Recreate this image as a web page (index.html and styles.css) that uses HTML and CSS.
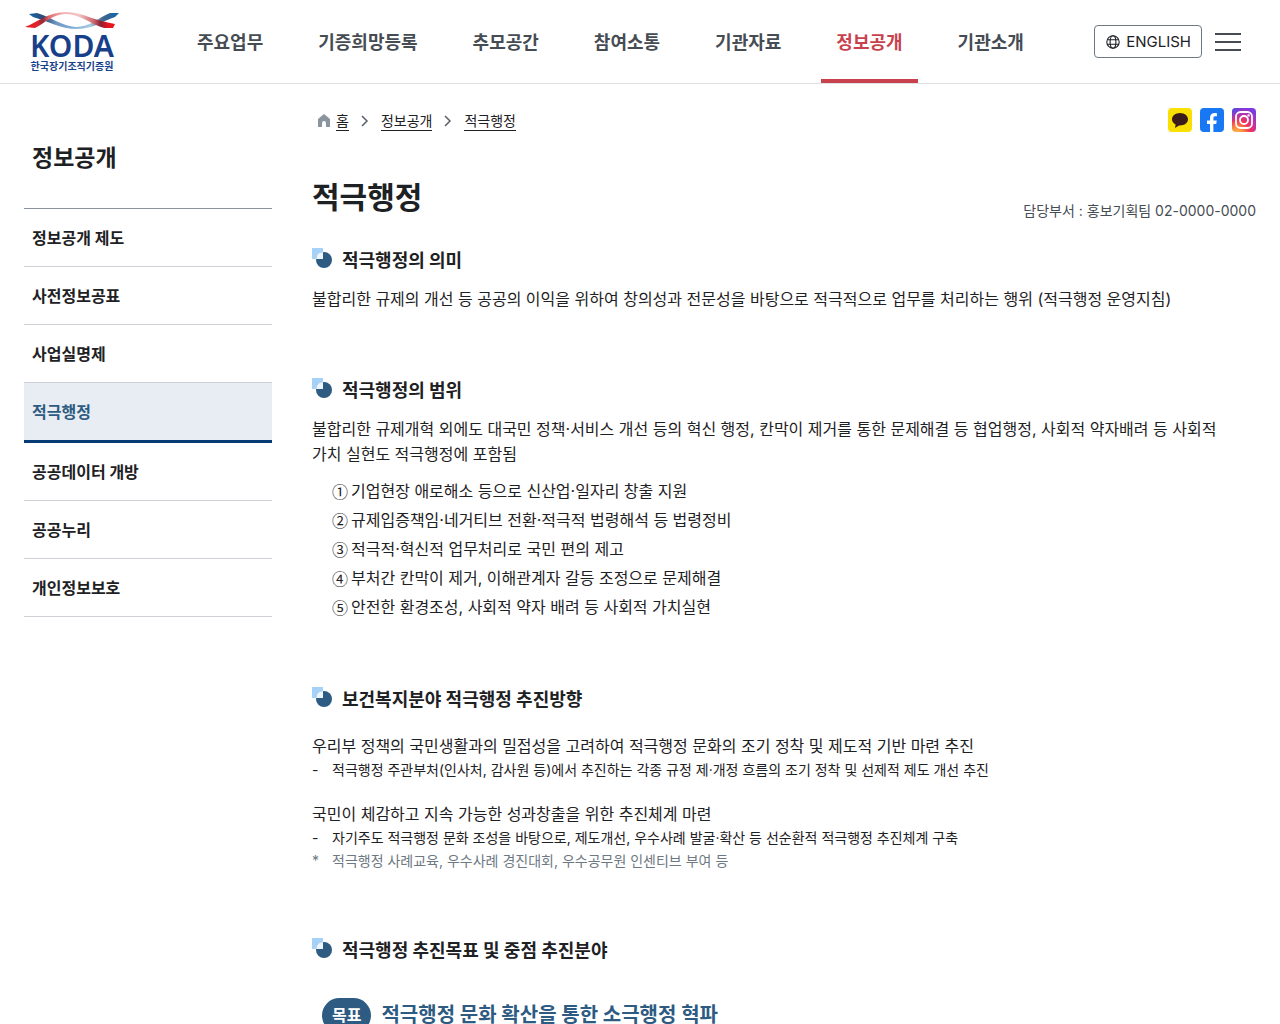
FILE: index.html
```html
<!DOCTYPE html>
<html lang="ko">
<head>
<meta charset="utf-8">
<meta name="viewport" content="width=device-width, initial-scale=1">
<title>적극행정 - 한국장기조직기증원</title>
<link rel="stylesheet" href="styles.css">
</head>
<body>
<svg class="defs" width="0" height="0" aria-hidden="true">
  <symbol id="bullet" viewBox="0 0 20 20">
    <path fill="#a6d2f8" d="M0 0h11v11H0z"/>
    <circle cx="12" cy="12" r="8" fill="#2d5b82"/>
    <path fill="#eef6fd" d="M4 11a7 7 0 0 1 7-7v7z"/>
  </symbol>
</svg>

<header class="header">
  <a class="logo" href="#">
    <svg class="logo-mark" viewBox="0 0 96 18" aria-hidden="true">
      <defs>
        <linearGradient id="red" x1="0" x2="1">
          <stop offset="0" stop-color="#e8161d"/><stop offset=".14" stop-color="#e0252b"/><stop offset=".2" stop-color="#8c2b3c"/><stop offset=".27" stop-color="#e56a6c"/><stop offset=".42" stop-color="#f3b3b3"/><stop offset=".6" stop-color="#f3c4c4"/><stop offset=".76" stop-color="#cf6a70"/><stop offset=".84" stop-color="#8a2236"/><stop offset=".92" stop-color="#e5161d"/><stop offset="1" stop-color="#e5161d"/>
        </linearGradient>
        <linearGradient id="blue" x1="0" x2="1">
          <stop offset="0" stop-color="#1565ae"/><stop offset=".16" stop-color="#2b4a74"/><stop offset=".3" stop-color="#6d96c0"/><stop offset=".5" stop-color="#86b2d8"/><stop offset=".68" stop-color="#a9cae4"/><stop offset=".82" stop-color="#43668a"/><stop offset="1" stop-color="#0d63b0"/>
        </linearGradient>
      </defs>
      <path fill="url(#blue)" d="M5 2l8-1c14 4 25 13 39 14 13 0 22-9 34-14h9l-4 4C80 8 70 17 53 17 36 17 24 9 9 5z"/>
      <path fill="url(#red)" d="M1 15C14 10 24 0 42 0c16 0 29 9 49 12l-2 4h-9C66 12 56 2 42 2 29 2 21 11 11 16z"/>
    </svg>
    <span class="logo-name">KODA</span>
    <span class="logo-sub">한국장기조직기증원</span>
  </a>
  <nav class="gnb" aria-label="주 메뉴">
    <a href="#">주요업무</a>
    <a href="#">기증희망등록</a>
    <a href="#">추모공간</a>
    <a href="#">참여소통</a>
    <a href="#">기관자료</a>
    <a href="#" class="active" aria-current="true">정보공개</a>
    <a href="#">기관소개</a>
  </nav>
  <div class="tools">
    <button class="lang" type="button">
      <svg viewBox="0 0 16 16" width="16" height="16" fill="none" stroke="currentColor" stroke-width="1.1" aria-hidden="true"><circle cx="8" cy="8" r="6.2"/><ellipse cx="8" cy="8" rx="2.9" ry="6.2"/><path d="M2.4 5.8h11.2M2.4 10.2h11.2"/></svg>
      ENGLISH
    </button>
    <button class="menu" type="button" aria-label="전체메뉴">
      <svg viewBox="0 0 26 20" width="26" height="20" stroke="#464c53" stroke-width="2" aria-hidden="true"><path d="M0 2h26M0 10h26M0 18h26"/></svg>
    </button>
  </div>
</header>

<div class="page">
  <aside class="side">
    <h2 class="side-title">정보공개</h2>
    <ul class="side-list">
      <li><a href="#">정보공개 제도</a></li>
      <li><a href="#">사전정보공표</a></li>
      <li><a href="#">사업실명제</a></li>
      <li class="active"><a href="#" aria-current="page">적극행정</a></li>
      <li><a href="#">공공데이터 개방</a></li>
      <li><a href="#">공공누리</a></li>
      <li><a href="#">개인정보보호</a></li>
    </ul>
  </aside>

  <main class="content">
    <div class="topline">
      <nav class="crumbs" aria-label="현재 위치">
        <svg class="home" viewBox="0 0 12 13" width="12" height="13" aria-hidden="true"><path fill="#8a949e" d="M6 0 0 5v8h4V9a2 2 0 0 1 4 0v4h4V5z"/></svg>
        <a href="#">홈</a>
        <svg class="arrow" viewBox="0 0 8 12" width="8" height="12" aria-hidden="true"><path d="m1 1 5 5-5 5"/></svg>
        <a href="#">정보공개</a>
        <svg class="arrow" viewBox="0 0 8 12" width="8" height="12" aria-hidden="true"><path d="m1 1 5 5-5 5"/></svg>
        <a href="#">적극행정</a>
      </nav>
      <div class="share">
        <a href="#" aria-label="카카오톡"><svg viewBox="0 0 24 24" width="24" height="24"><rect width="24" height="24" rx="4" fill="#f9e000"/><path fill="#3b1c1c" d="M12 5c-4.500 0-8 2.800-8 6.300 0 2.300 1.500 4.200 3.600 5.300L7 20l4-2.500h1c4.500 0 8-2.700 8-6.200S16.500 5 12 5z"/></svg></a>
        <a href="#" aria-label="페이스북"><svg viewBox="0 0 24 24" width="24" height="24"><rect width="24" height="24" rx="4" fill="#1877f2"/><path fill="#fff" d="M10 24v-8H7v-3.500h3V10c0-3.300 1.800-5 4.700-5 .9 0 1.700.1 2.300.2v3h-1.600c-1.600 0-2 .9-2 2v2.300h3.400l-.6 3.500h-2.800v8z"/></svg></a>
        <a href="#" aria-label="인스타그램"><svg viewBox="0 0 24 24" width="24" height="24">
          <defs>
            <radialGradient id="insta" cx=".2" cy="1.080" r="1.150"><stop offset="0" stop-color="#fec053"/><stop offset=".25" stop-color="#f98a3c"/><stop offset=".5" stop-color="#f2325a"/><stop offset=".75" stop-color="#c22fa8"/><stop offset="1" stop-color="#7a3be0"/></radialGradient>
            <radialGradient id="instaCorner" cx="0" cy="0" r=".6"><stop offset="0" stop-color="#3f51e8"/><stop offset="1" stop-color="#7a3be0" stop-opacity="0"/></radialGradient>
          </defs>
          <rect width="24" height="24" rx="4" fill="url(#insta)"/><rect width="24" height="24" rx="4" fill="url(#instaCorner)"/>
          <g fill="none" stroke="#fff" stroke-width="1.800"><rect x="4" y="4" width="16" height="16" rx="4.500"/><circle cx="12" cy="12" r="4"/></g><circle cx="16.600" cy="7.400" r="1.200" fill="#fff"/>
        </svg></a>
      </div>
    </div>

    <div class="title-row">
      <h1>적극행정</h1>
      <p class="dept">담당부서 : 홍보기획팀 02-0000-0000</p>
    </div>

    <section>
      <h2><svg class="bullet"><use href="#bullet"/></svg>적극행정의 의미</h2>
      <p>불합리한 규제의 개선 등 공공의 이익을 위하여 창의성과 전문성을 바탕으로 적극적으로 업무를 처리하는 행위 (적극행정 운영지침)</p>
    </section>

    <section>
      <h2><svg class="bullet"><use href="#bullet"/></svg>적극행정의 범위</h2>
      <p>불합리한 규제개혁 외에도 대국민 정책·서비스 개선 등의 혁신 행정, 칸막이 제거를 통한 문제해결 등 협업행정, 사회적 약자배려 등 사회적 가치 실현도 적극행정에 포함됨</p>
      <ul class="numbered">
        <li><span>①</span>기업현장 애로해소 등으로 신산업·일자리 창출 지원</li>
        <li><span>②</span>규제입증책임·네거티브 전환·적극적 법령해석 등 법령정비</li>
        <li><span>③</span>적극적·혁신적 업무처리로 국민 편의 제고</li>
        <li><span>④</span>부처간 칸막이 제거, 이해관계자 갈등 조정으로 문제해결</li>
        <li><span>⑤</span>안전한 환경조성, 사회적 약자 배려 등 사회적 가치실현</li>
      </ul>
    </section>

    <section>
      <h2><svg class="bullet"><use href="#bullet"/></svg>보건복지분야 적극행정 추진방향</h2>
      <div class="plans">
        <div>
          <p>우리부 정책의 국민생활과의 밀접성을 고려하여 적극행정 문화의 조기 정착 및 제도적 기반 마련 추진</p>
          <ul class="notes">
            <li><span>-</span>적극행정 주관부처(인사처, 감사원 등)에서 추진하는 각종 규정 제·개정 흐름의 조기 정착 및 선제적 제도 개선 추진</li>
          </ul>
        </div>
        <div>
          <p>국민이 체감하고 지속 가능한 성과창출을 위한 추진체계 마련</p>
          <ul class="notes">
            <li><span>-</span>자기주도 적극행정 문화 조성을 바탕으로, 제도개선, 우수사례 발굴·확산 등 선순환적 적극행정 추진체계 구축</li>
            <li class="remark"><span>*</span>적극행정 사례교육, 우수사례 경진대회, 우수공무원 인센티브 부여 등</li>
          </ul>
        </div>
      </div>
    </section>

    <section>
      <h2><svg class="bullet"><use href="#bullet"/></svg>적극행정 추진목표 및 중점 추진분야</h2>
      <div class="goal">
        <span class="badge">목표</span>
        <strong>적극행정 문화 확산을 통한 소극행정 혁파</strong>
      </div>
    </section>
  </main>
</div>
</body>
</html>
```
FILE: styles.css
```css
* {
  box-sizing: border-box;
}

body,
h1,
h2,
p,
ul {
  margin: 0;
  padding: 0;
}

ul {
  list-style: none;
}

a {
  color: inherit;
  text-decoration: none;
}

body {
  background: #fff;
  color: #1e2124;
  font-family: Inter, "Noto Sans CJK KR", sans-serif;
  font-size: 16px;
  line-height: 25px;
  word-break: keep-all;
}

button {
  font: inherit;
  color: inherit;
  background: none;
  cursor: pointer;
}

svg {
  display: block;
  flex: none;
}

.defs {
  position: absolute;
}

/* Header */

.header {
  display: flex;
  height: 84px;
  padding: 0 39px 0 24px;
  border-bottom: 1px solid #e0e2e4;
}

.logo {
  display: flex;
  flex-direction: column;
  align-items: center;
  width: 96px;
  padding-top: 12px;
  color: #173f8a;
  font-family: "Noto Sans", "Noto Sans CJK KR", sans-serif;
  font-weight: 700;
}

.logo-mark {
  width: 96px;
  height: 18px;
}

.logo-name {
  font-size: 30px;
  line-height: 31px;
  font-weight: 600;
}

.logo-sub {
  font-size: 10px;
  line-height: 10px;
  white-space: nowrap;
}

.gnb {
  display: flex;
  gap: 25px;
  margin-left: 62px;
}

.gnb a {
  display: flex;
  align-items: center;
  padding: 6px 15px 0;
  border-bottom: 4px solid transparent;
  color: #464c53;
  font-size: 18px;
  font-weight: 700;
  white-space: nowrap;
}

.gnb .active {
  color: #c8424e;
  border-color: #c8424e;
}

.tools {
  display: flex;
  align-items: center;
  gap: 13px;
  margin-left: auto;
}

.lang {
  display: flex;
  align-items: center;
  gap: 5px;
  height: 33px;
  padding: 0 10px;
  border: 1px solid #6d7882;
  border-radius: 4px;
  font-size: 15px;
}

.menu {
  padding: 0;
  border: 0;
}

/* Page columns */

.page {
  display: grid;
  grid-template-columns: 248px minmax(0, 1fr);
  gap: 40px;
  padding: 24px 24px 0;
}

.side-title {
  padding: 34px 8px 34px;
  border-bottom: 1px solid #8a949e;
  font-size: 23px;
  line-height: 32px;
}

.side-list a {
  display: flex;
  align-items: center;
  min-height: 57px;
  padding: 2px 8px 0;
  font-weight: 700;
}

.side-list li {
  border-bottom: 1px solid #cdd1d5;
}

.side-list .active {
  background: #e8edf3;
  border-bottom: 3px solid #063a74;
  color: #2d5b82;
}

.topline {
  display: flex;
  justify-content: space-between;
}

.crumbs {
  display: flex;
  align-items: center;
  padding: 1px 0 0 6px;
  font-size: 14px;
}

.crumbs a {
  border-bottom: 1px solid #1e2124;
  line-height: 19px;
}

.home {
  margin-right: 6px;
}

.arrow {
  margin: 0 12px;
  fill: none;
  stroke: #58616a;
  stroke-width: 1.5;
}

.share {
  display: flex;
  gap: 8px;
}

.title-row {
  display: flex;
  justify-content: space-between;
  align-items: flex-end;
  margin-top: 43px;
}

h1 {
  font-size: 30px;
  line-height: 45px;
}

.dept {
  color: #464c53;
  font-size: 14px;
  line-height: 18px;
}

/* Sections */

section {
  margin-top: 65px;
  padding-right: 8px;
}

.title-row + section {
  margin-top: 27px;
}

section h2 {
  display: flex;
  gap: 10px;
  margin-bottom: 13px;
  font-size: 18px;
  line-height: 27px;
}

.bullet {
  width: 20px;
  height: 20px;
  margin-top: 1px;
}

.numbered {
  display: grid;
  gap: 4px;
  margin-top: 12px;
  padding: 0 0 1px 20px;
}

.numbered li {
  display: flex;
}

.numbered span {
  width: 19px;
  font-family: "Noto Sans CJK KR", sans-serif;
}

.plans {
  display: grid;
  gap: 21px;
  padding-top: 8px;
}

.plans p {
  line-height: 24px;
}

.notes {
  font-size: 14px;
  line-height: 23px;
}

.notes li {
  display: flex;
}

.notes span {
  width: 20px;
}

.remark {
  color: #6d7882;
}

.goal {
  display: flex;
  align-items: center;
  gap: 10px;
  padding: 21px 10px 0;
  color: #2d5b82;
  font-size: 20px;
}

.badge {
  padding: 5px 10px;
  border-radius: 18px;
  background: #2d5b82;
  color: #fff;
  font-size: 16px;
  font-weight: 700;
}
```
